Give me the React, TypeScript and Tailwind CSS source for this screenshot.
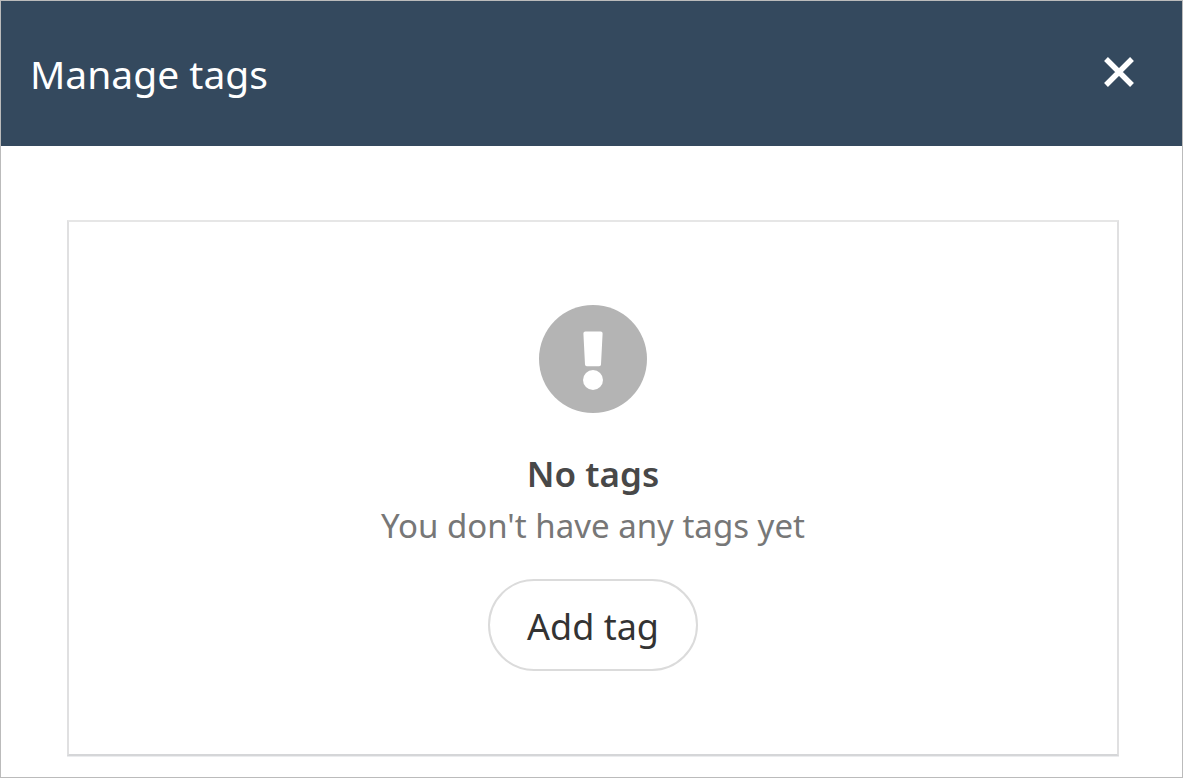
function CloseIcon() {
  return (
    <svg viewBox="0 0 32 32" className="size-8" aria-hidden="true">
      <path d="M3 3 29 29M29 3 3 29" stroke="currentColor" strokeWidth="5.4" fill="none" />
    </svg>
  );
}

function AlertIcon() {
  return (
    <svg viewBox="0 0 108 108" className="size-[108px]" aria-hidden="true">
      <circle cx="54" cy="54" r="54" fill="#b4b4b4" />
      <path
        d="M46.4 26.5h15.2a2 2 0 0 1 2 2.1l-1.6 31a1.8 1.8 0 0 1-1.8 1.7H47.8a1.8 1.8 0 0 1-1.8-1.7l-1.6-31a2 2 0 0 1 2-2.1z"
        fill="#fff"
      />
      <circle cx="54" cy="75" r="10" fill="#fff" />
    </svg>
  );
}

export default function App() {
  return (
    <div className="flex min-h-screen flex-col border border-[#bbbbbb] bg-white font-['Noto_Sans','Open_Sans',sans-serif]">
      <header className="flex items-center justify-between bg-[#34495e] py-11 pr-[47px] pl-[29px] text-white">
        <h1 className="text-[39px] leading-[57px]">Manage tags</h1>
        <button type="button" aria-label="Close" className="block pb-1">
          <CloseIcon />
        </button>
      </header>
      <main className="flex flex-1 flex-col pt-[74px] pr-[63px] pb-[21px] pl-[66px]">
        <section className="flex flex-1 flex-col items-center border-2 border-[#e0e0e1] border-t-[#e6e6e6] border-b-[#d5d6d8] pt-[83px] pb-[82px] text-center shadow-[0_1px_0_#ebecee]">
          <AlertIcon />
          <h2 className="mt-[35px] text-[35px] leading-[52px] font-semibold text-[#484848]">No tags</h2>
          <p className="text-[33px] leading-[52px] text-[#777777]">You don't have any tags yet</p>
          <button
            type="button"
            className="mt-[27px] rounded-full border-2 border-[#dbdbdb] px-[37px] pt-5 pb-4 text-[36px] leading-[52px] text-[#333333]"
          >
            Add tag
          </button>
        </section>
      </main>
    </div>
  );
}
